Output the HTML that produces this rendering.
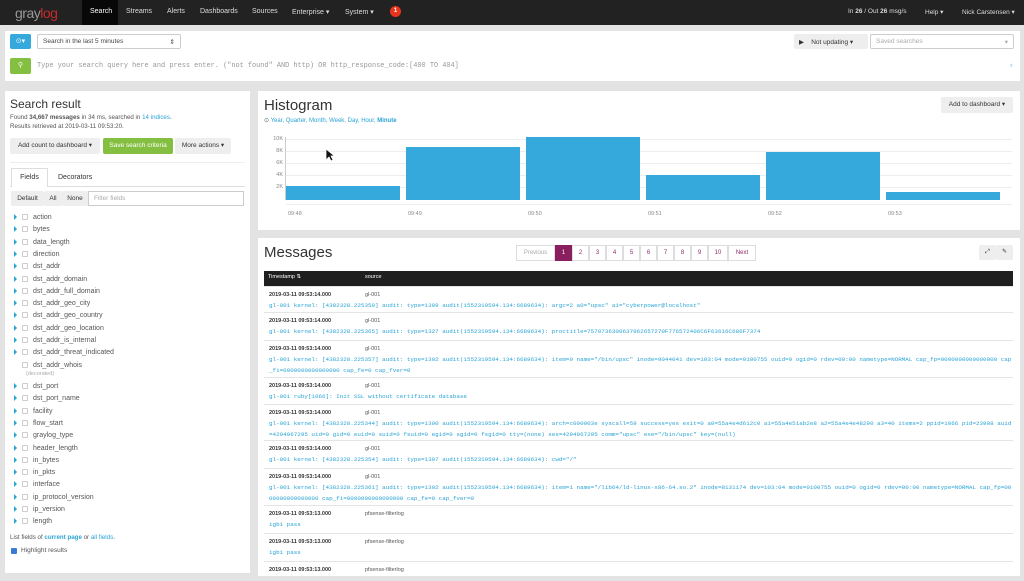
<!DOCTYPE html>
<html><head><meta charset="utf-8"><style>
*{box-sizing:border-box;margin:0;padding:0}
body{width:1024px;height:576px;overflow:hidden;background:#e3e3e3;font-family:"Liberation Sans",sans-serif;font-size:7px;color:#333;position:relative}
.a{position:absolute}
.nav{left:0;top:0;width:1024px;height:25px;background:#222}
.panel{background:#fff;position:absolute}
.btn{position:absolute;background:#eee;border-radius:2px;font-size:6.5px;color:#333;text-align:center}
.fl{position:absolute;left:14px;font-size:7px;color:#555;height:12.3px;line-height:12.3px;white-space:nowrap}
.fl i{display:inline-block;width:0;height:0;border-left:3px solid #2ba4d6;border-top:3px solid transparent;border-bottom:3px solid transparent;margin-right:5px;vertical-align:-1px}
.fl b{display:inline-block;width:6px;height:6px;border:1px solid #ccc;border-radius:1px;margin-right:5px;vertical-align:-1px;font-weight:normal}
.row{position:absolute;left:264px;width:749px;border-top:1px solid #e4e4e4}
.row .ts{position:absolute;left:5px;top:5px;font-size:5.5px;font-weight:bold;color:#333}
.row .src{position:absolute;left:101px;top:5px;font-size:5.5px;color:#555}
.row .m{position:absolute;left:5px;top:13px;width:744px;font-family:"Liberation Mono",monospace;font-size:5.9px;line-height:11px;color:#2ba4d6;word-break:break-all}
.pg{position:absolute;top:245px;height:16px;border:1px solid #ddd;font-size:6px;color:#8a2e6b;line-height:14px;text-align:center}
.yl{position:absolute;left:266px;width:17px;text-align:right;font-size:5.5px;color:#888}
.gl{position:absolute;left:286px;width:726px;height:1px;background:#eee}
.bar{position:absolute;background:#35a8dc}
.xl{position:absolute;top:211px;font-size:5.5px;color:#888}
</style></head><body>
<div class="a nav"></div>
<div class="a" style="left:15px;top:5px;font-size:14px;color:#999;letter-spacing:-0.5px">gray<span style="color:#c62a2a">log</span></div>
<div class="a" style="left:82px;top:0;width:36px;height:25px;background:#080808"></div>
<span class="a" style="left:90px;top:8px;color:#fff;font-size:7px">Search</span>
<span class="a" style="left:126px;top:8px;color:#ddd;font-size:7px">Streams</span>
<span class="a" style="left:167px;top:8px;color:#ddd;font-size:7px">Alerts</span>
<span class="a" style="left:200px;top:8px;color:#ddd;font-size:7px">Dashboards</span>
<span class="a" style="left:252px;top:8px;color:#ddd;font-size:7px">Sources</span>
<span class="a" style="left:292px;top:8px;color:#ddd;font-size:7px">Enterprise ▾</span>
<span class="a" style="left:345px;top:8px;color:#ddd;font-size:7px">System ▾</span>
<div class="a" style="left:390px;top:6px;width:11px;height:11px;border-radius:6px;background:#e8341c;color:#fff;font-size:6px;font-weight:bold;text-align:center;line-height:11px">1</div>
<span class="a" style="left:848px;top:8px;color:#ddd;font-size:6.5px">In <b>26</b> / Out <b>26</b> msg/s</span>
<span class="a" style="left:925px;top:8px;color:#ddd;font-size:6.5px">Help ▾</span>
<span class="a" style="left:962px;top:8px;color:#ddd;font-size:6.5px">Nick Carstensen ▾</span>

<div class="panel" style="left:5px;top:31px;width:1015px;height:50px"></div>
<div class="a" style="left:10px;top:34px;width:21px;height:15px;background:#35a8dc;border-radius:2px;color:#fff;font-size:7px;text-align:center;line-height:15px">⊙▾</div>
<div class="a" style="left:37px;top:34px;width:144px;height:15px;border:1px solid #ccc;border-radius:2px;font-size:6.5px;padding:3px 5px;color:#444">Search in the last 5 minutes<span style="float:right">⇕</span></div>
<div class="a" style="left:10px;top:58px;width:21px;height:16px;background:#84bf41;border-radius:2px;color:#fff;font-size:7px;text-align:center;line-height:16px">⚲</div>
<div class="a" style="left:37px;top:62px;font-family:'Liberation Mono',monospace;font-size:6.9px;color:#999;white-space:nowrap">Type your search query here and press enter. ("not found" AND http) OR http_response_code:[400 TO 404]</div>
<div class="a" style="left:794px;top:34px;width:74px;height:15px;background:#eee;border-radius:2px;font-size:6.5px;padding:4px 5px">▶ &nbsp;&nbsp;&nbsp;Not updating ▾</div>
<div class="a" style="left:870px;top:34px;width:144px;height:15px;border:1px solid #ccc;border-radius:2px;font-size:6.5px;padding:3px 5px;color:#aaa">Saved searches<span style="float:right">▾</span></div>
<div class="a" style="left:1009px;top:63px;font-size:6px;color:#35a8dc">♁</div>

<div class="panel" style="left:5px;top:91px;width:245px;height:482px"></div>
<div class="a" style="left:10px;top:97px;font-size:12px;color:#333">Search result</div>
<div class="a" style="left:10px;top:113px;font-size:6.2px;color:#555;line-height:9px">Found <b>34,667 messages</b> in 34 ms, searched in <span style="color:#2ba4d6">14 indices</span>.<br>Results retrieved at 2019-03-11 09:53:20.</div>
<div class="btn" style="left:10px;top:138px;width:90px;height:16px;line-height:16px">Add count to dashboard ▾</div>
<div class="btn" style="left:103px;top:138px;width:70px;height:16px;line-height:16px;background:#84bf41;color:#fff">Save search criteria</div>
<div class="btn" style="left:175px;top:138px;width:56px;height:16px;line-height:16px">More actions ▾</div>
<div class="a" style="left:10px;top:162px;width:235px;height:1px;background:#eee"></div>
<div class="a" style="left:10px;top:186px;width:235px;height:1px;background:#ddd"></div>
<div class="a" style="left:11px;top:168px;width:37px;height:19px;background:#fff;border:1px solid #ddd;border-bottom:none;font-size:7px;text-align:center;line-height:18px">Fields</div>
<div class="a" style="left:58px;top:174px;font-size:7px">Decorators</div>
<div class="btn" style="left:11px;top:191px;width:33px;height:15px;line-height:15px">Default</div>
<div class="btn" style="left:44px;top:191px;width:18px;height:15px;line-height:15px">All</div>
<div class="btn" style="left:62px;top:191px;width:26px;height:15px;line-height:15px">None</div>
<div class="a" style="left:88px;top:191px;width:156px;height:15px;border:1px solid #ccc;font-size:6.5px;color:#aaa;padding:3px 5px">Filter fields</div>

<div class="fl" style="top:212px"><i></i><b></b>action</div>
<div class="fl" style="top:224.3px"><i></i><b></b>bytes</div>
<div class="fl" style="top:236.6px"><i></i><b></b>data_length</div>
<div class="fl" style="top:248.9px"><i></i><b></b>direction</div>
<div class="fl" style="top:261.2px"><i></i><b></b>dst_addr</div>
<div class="fl" style="top:273.5px"><i></i><b></b>dst_addr_domain</div>
<div class="fl" style="top:285.8px"><i></i><b></b>dst_addr_full_domain</div>
<div class="fl" style="top:298.1px"><i></i><b></b>dst_addr_geo_city</div>
<div class="fl" style="top:310.4px"><i></i><b></b>dst_addr_geo_country</div>
<div class="fl" style="top:322.7px"><i></i><b></b>dst_addr_geo_location</div>
<div class="fl" style="top:335px"><i></i><b></b>dst_addr_is_internal</div>
<div class="fl" style="top:347.3px"><i></i><b></b>dst_addr_threat_indicated</div>
<div class="fl" style="top:359.6px"><i style="visibility:hidden"></i><b></b>dst_addr_whois</div>
<div class="a" style="left:26px;top:371px;font-size:5.5px;color:#aaa">(decorated)</div>
<div class="fl" style="top:381px"><i></i><b></b>dst_port</div>
<div class="fl" style="top:393.3px"><i></i><b></b>dst_port_name</div>
<div class="fl" style="top:405.6px"><i></i><b></b>facility</div>
<div class="fl" style="top:417.9px"><i></i><b></b>flow_start</div>
<div class="fl" style="top:430.2px"><i></i><b></b>graylog_type</div>
<div class="fl" style="top:442.5px"><i></i><b></b>header_length</div>
<div class="fl" style="top:454.8px"><i></i><b></b>in_bytes</div>
<div class="fl" style="top:467.1px"><i></i><b></b>in_pkts</div>
<div class="fl" style="top:479.4px"><i></i><b></b>interface</div>
<div class="fl" style="top:491.7px"><i></i><b></b>ip_protocol_version</div>
<div class="fl" style="top:504px"><i></i><b></b>ip_version</div>
<div class="fl" style="top:516.3px"><i></i><b></b>length</div>
<div class="a" style="left:10px;top:534px;font-size:6.2px;color:#555">List fields of <b style="color:#2ba4d6">current page</b> or <span style="color:#2ba4d6">all fields</span>.</div>
<div class="a" style="left:11px;top:548px;width:6px;height:6px;background:#3a7bd5;border-radius:1px"></div>
<div class="a" style="left:21px;top:547px;font-size:6.5px;color:#555">Highlight results</div>

<div class="panel" style="left:258px;top:91px;width:762px;height:139px"></div>
<div class="a" style="left:264px;top:97px;font-size:15px;color:#333">Histogram</div>
<div class="a" style="left:264px;top:117px;font-size:6px;color:#2ba4d6"><span style="color:#666">⊙</span> Year, Quarter, Month, Week, Day, Hour, <b>Minute</b></div>
<div class="btn" style="left:941px;top:97px;width:72px;height:16px;line-height:16px">Add to dashboard ▾</div>
<div class="gl" style="top:139px"></div><div class="gl" style="top:151px"></div><div class="gl" style="top:163px"></div><div class="gl" style="top:175px"></div><div class="gl" style="top:187px"></div>
<div class="yl" style="top:136px">10K</div><div class="yl" style="top:148px">8K</div><div class="yl" style="top:160px">6K</div><div class="yl" style="top:172px">4K</div><div class="yl" style="top:184px">2K</div>
<div class="a" style="left:285px;top:137px;width:1px;height:63px;background:#ccc"></div>
<div class="bar" style="left:286px;top:186px;width:114px;height:14px"></div>
<div class="bar" style="left:406px;top:147px;width:114px;height:53px"></div>
<div class="bar" style="left:526px;top:137px;width:114px;height:63px"></div>
<div class="bar" style="left:646px;top:175px;width:114px;height:25px"></div>
<div class="bar" style="left:766px;top:152px;width:114px;height:48px"></div>
<div class="bar" style="left:886px;top:192px;width:114px;height:8px"></div>
<div class="a" style="left:286px;top:204px;width:726px;height:1px;background:#eee"></div>
<div class="xl" style="left:288px">09:48</div><div class="xl" style="left:408px">09:49</div><div class="xl" style="left:528px">09:50</div><div class="xl" style="left:648px">09:51</div><div class="xl" style="left:768px">09:52</div><div class="xl" style="left:888px">09:53</div>
<svg class="a" style="left:325px;top:148px" width="10" height="14" viewBox="0 0 10 14"><path d="M1 1 L1 12 L4 9 L6 13 L8 12 L6 8 L9.5 8 Z" fill="#111" stroke="#fff" stroke-width="0.8"/></svg>

<div class="panel" style="left:258px;top:238px;width:762px;height:338px"></div>
<div class="a" style="left:264px;top:244px;font-size:15px;color:#333">Messages</div>
<div class="pg" style="left:516px;width:39px;color:#aaa">Previous</div>
<div class="pg" style="left:555px;width:17px;background:#8a1f5f;color:#fff;border-color:#8a1f5f">1</div>
<div class="pg" style="left:572px;width:17px">2</div><div class="pg" style="left:589px;width:17px">3</div><div class="pg" style="left:606px;width:17px">4</div><div class="pg" style="left:623px;width:17px">5</div><div class="pg" style="left:640px;width:17px">6</div><div class="pg" style="left:657px;width:17px">7</div><div class="pg" style="left:674px;width:17px">8</div><div class="pg" style="left:691px;width:17px">9</div><div class="pg" style="left:708px;width:20px">10</div><div class="pg" style="left:728px;width:28px">Next</div>
<div class="btn" style="left:979px;top:245px;width:17px;height:15px;line-height:15px;font-size:6px">⤢</div>
<div class="btn" style="left:996px;top:245px;width:17px;height:15px;line-height:15px;font-size:6px">✎</div>
<div class="a" style="left:264px;top:271px;width:749px;height:15px;background:#1f1f1f"></div>
<div class="a" style="left:268px;top:274px;font-size:5.5px;color:#fff">Timestamp ⇅</div>
<div class="a" style="left:365px;top:274px;font-size:5.5px;color:#fff">source</div>

<div class="row" style="top:286px;height:26px"><span class="ts">2019-03-11 09:53:14.000</span><span class="src">gl-001</span><div class="m">gl-001 kernel: [4382328.225350] audit: type=1309 audit(1552319594.134:6689634): argc=2 a0="upsc" a1="cyberpower@localhost"</div></div>
<div class="row" style="top:312px;height:28px"><span class="ts">2019-03-11 09:53:14.000</span><span class="src">gl-001</span><div class="m">gl-001 kernel: [4382328.225365] audit: type=1327 audit(1552319594.134:6689634): proctitle=7570736300637962657270F776572406C6F63616C686F7374</div></div>
<div class="row" style="top:340px;height:37px"><span class="ts">2019-03-11 09:53:14.000</span><span class="src">gl-001</span><div class="m">gl-001 kernel: [4382328.225357] audit: type=1302 audit(1552319594.134:6689634): item=0 name="/bin/upsc" inode=9044041 dev=103:04 mode=0100755 ouid=0 ogid=0 rdev=00:00 nametype=NORMAL cap_fp=0000000000000000 cap_fi=0000000000000000 cap_fe=0 cap_fver=0</div></div>
<div class="row" style="top:377px;height:27px"><span class="ts">2019-03-11 09:53:14.000</span><span class="src">gl-001</span><div class="m">gl-001 ruby[1066]: Init SSL without certificate database</div></div>
<div class="row" style="top:404px;height:36px"><span class="ts">2019-03-11 09:53:14.000</span><span class="src">gl-001</span><div class="m">gl-001 kernel: [4382328.225344] audit: type=1300 audit(1552319594.134:6689634): arch=c000003e syscall=59 success=yes exit=0 a0=55a4e4d612c0 a1=55a4e51ab2e8 a2=55a4e4e48290 a3=40 items=2 ppid=1066 pid=23908 auid=4294967295 uid=0 gid=0 euid=0 suid=0 fsuid=0 egid=0 sgid=0 fsgid=0 tty=(none) ses=4294967295 comm="upsc" exe="/bin/upsc" key=(null)</div></div>
<div class="row" style="top:440px;height:28px"><span class="ts">2019-03-11 09:53:14.000</span><span class="src">gl-001</span><div class="m">gl-001 kernel: [4382328.225354] audit: type=1307 audit(1552319594.134:6689634): cwd="/"</div></div>
<div class="row" style="top:468px;height:37px"><span class="ts">2019-03-11 09:53:14.000</span><span class="src">gl-001</span><div class="m">gl-001 kernel: [4382328.225361] audit: type=1302 audit(1552319594.134:6689634): item=1 name="/lib64/ld-linux-x86-64.so.2" inode=8131174 dev=103:04 mode=0100755 ouid=0 ogid=0 rdev=00:00 nametype=NORMAL cap_fp=0000000000000000 cap_fi=0000000000000000 cap_fe=0 cap_fver=0</div></div>
<div class="row" style="top:505px;height:28px"><span class="ts">2019-03-11 09:53:13.000</span><span class="src">pfsense-filterlog</span><div class="m">igb1 pass</div></div>
<div class="row" style="top:533px;height:28px"><span class="ts">2019-03-11 09:53:13.000</span><span class="src">pfsense-filterlog</span><div class="m">igb1 pass</div></div>
<div class="row" style="top:561px;height:20px"><span class="ts">2019-03-11 09:53:13.000</span><span class="src">pfsense-filterlog</span></div>
</body></html>
